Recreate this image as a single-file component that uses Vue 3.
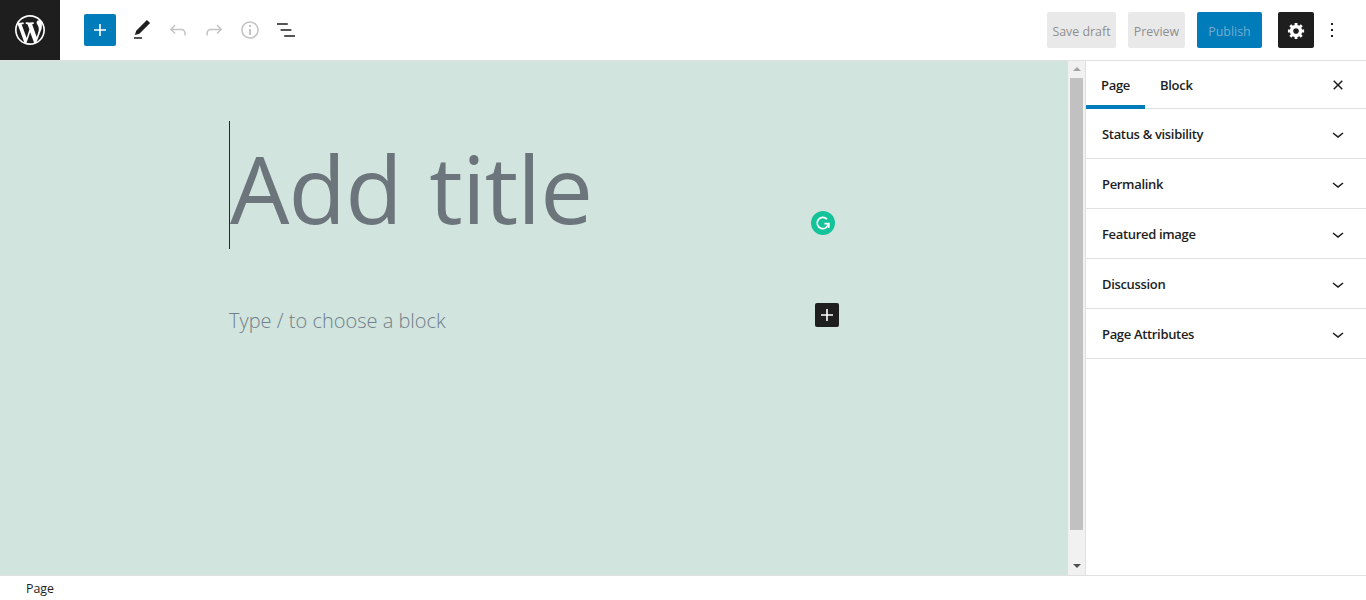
<template>
  <div class="editor">
    <header class="topbar">
      <a class="wp-logo">
        <svg viewBox="-2 -2 24 24" width="36" height="36"><path fill="#fff" :d="icons.wp" /></svg>
      </a>
      <div class="tools">
        <button class="add-btn">
          <svg viewBox="0 0 24 24" width="24" height="24"><path fill="#fff" :d="icons.plus" /></svg>
        </button>
        <button v-for="tool in tools" :key="tool.name" class="icon-btn">
          <svg viewBox="0 0 24 24" width="24" height="24"><path :fill="tool.color" :d="tool.d" /></svg>
        </button>
      </div>
      <div class="actions">
        <button class="btn-muted save">Save draft</button>
        <button class="btn-muted preview">Preview</button>
        <button class="btn-publish">Publish</button>
        <button class="btn-settings">
          <svg viewBox="0 0 20 20" width="19" height="19"><path fill="#fff" :d="icons.cog" /></svg>
        </button>
        <button class="btn-more">
          <svg viewBox="0 0 24 24" width="24" height="24"><path fill="#1e1e1e" :d="icons.dots" /></svg>
        </button>
      </div>
    </header>

    <div class="body">
      <main class="canvas">
        <div class="writing">
          <h1 class="title">Add title</h1>
          <div class="block-row">
            <p class="placeholder">Type / to choose a block</p>
            <button class="inline-add">
              <svg viewBox="0 0 24 24" width="24" height="24"><path fill="#fff" :d="icons.plus" /></svg>
            </button>
          </div>
          <span class="grammarly">
            <svg viewBox="0 0 24 24" width="24" height="24">
              <circle cx="12" cy="12" r="12" fill="#15c39a" />
              <path d="M17.4 12.2a5.6 5.6 0 1 1-1.5-4" fill="none" stroke="#fff" stroke-width="1.7" />
              <path d="M13.4 12.6h4.4v4.2" fill="none" stroke="#fff" stroke-width="1.7" />
            </svg>
          </span>
        </div>
      </main>

      <div class="scrollbar">
        <span class="arrow arrow-up"></span>
        <div class="thumb"></div>
        <span class="arrow arrow-down"></span>
      </div>

      <aside class="sidebar">
        <div class="tabs">
          <div class="tab active">Page</div>
          <div class="tab">Block</div>
          <button class="close">
            <svg viewBox="0 0 24 24" width="24" height="24"><path fill="#1e1e1e" :d="icons.close" /></svg>
          </button>
        </div>
        <div v-for="panel in panels" :key="panel" class="panel">
          <span>{{ panel }}</span>
          <svg viewBox="0 0 24 24" width="24" height="24"><path fill="#1e1e1e" :d="icons.chevron" /></svg>
        </div>
      </aside>
    </div>

    <footer class="statusbar">Page</footer>
  </div>
</template>

<script setup>
const icons = {
  wp: 'M20 10c0-5.51-4.49-10-10-10C4.48 0 0 4.49 0 10c0 5.52 4.48 10 10 10 5.51 0 10-4.48 10-10zM7.78 15.37L4.37 6.22c.55-.02 1.17-.08 1.17-.08.5-.06.44-1.13-.06-1.11 0 0-1.45.11-2.37.11-.18 0-.37 0-.58-.01C4.12 2.69 6.87 1.11 10 1.11c2.33 0 4.45.87 6.05 2.34-.68-.11-1.65.39-1.65 1.58 0 .74.45 1.36.9 2.1.35.61.55 1.36.55 2.46 0 1.49-1.4 5-1.4 5l-3.03-8.37c.54-.02.82-.17.82-.17.5-.05.44-1.25-.06-1.22 0 0-1.44.12-2.38.12-.87 0-2.33-.12-2.33-.12-.5-.03-.56 1.2-.06 1.22l.92.08 1.26 3.41zM17.41 10c.24-.64.74-1.87.43-4.25.7 1.29 1.05 2.71 1.05 4.25 0 3.29-1.73 6.24-4.4 7.78.97-2.59 1.94-5.2 2.92-7.78zM6.1 18.09C3.12 16.65 1.11 13.53 1.11 10c0-1.3.23-2.48.72-3.59C3.25 10.3 4.67 14.2 6.1 18.09zm4.03-6.63l2.58 6.98c-.86.29-1.76.45-2.71.45-.79 0-1.57-.11-2.29-.33.81-2.38 1.62-4.74 2.42-7.1z',
  plus: 'M18 11.2h-5.2V6h-1.6v5.2H6v1.6h5.2V18h1.6v-5.2H18z',
  cog: 'M18 12h-2.18c-.17.7-.44 1.35-.81 1.93l1.54 1.54-2.1 2.1-1.54-1.54c-.58.36-1.23.63-1.91.79V19H8v-2.18c-.68-.16-1.33-.43-1.91-.79l-1.54 1.54-2.12-2.12 1.54-1.54c-.36-.58-.63-1.23-.79-1.91H1V9.03h2.17c.16-.7.44-1.35.8-1.94L2.43 5.55l2.1-2.1 1.54 1.54c.58-.37 1.24-.64 1.93-.81V2h3v2.18c.68.16 1.33.43 1.91.79l1.54-1.54 2.12 2.12-1.54 1.54c.36.59.64 1.24.8 1.94H18V12zm-8.5 1.5c1.66 0 3-1.34 3-3s-1.34-3-3-3-3 1.34-3 3 1.34 3 3 3z',
  dots: 'M13 19h-2v-2h2v2zm0-6h-2v-2h2v2zm0-6h-2V5h2v2z',
  close: 'M12 13.06l3.712 3.713 1.061-1.06L13.061 12l3.712-3.712-1.06-1.06L12 10.938 8.288 7.227l-1.061 1.06L10.939 12l-3.712 3.712 1.06 1.061L12 13.061z',
  chevron: 'M17.5 11.6L12 16l-5.5-4.4.9-1.2L12 14l4.5-3.6 1 1.2z'
}

const tools = [
  { name: 'tools', color: '#1e1e1e', d: 'M20.1 5.1L16.9 2 6.2 12.7l-1.3 4.4 4.5-1.3L20.1 5.1zM4 20.8h8v-1.5H4v1.5z' },
  { name: 'undo', color: '#c4c4c4', d: 'M18.3 11.7c-.6-.6-1.4-.9-2.3-.9H6.7l2.9-3.3-1.1-1-4.5 5L8.5 16l1-1-2.7-2.7H16c.5 0 .9.2 1.3.5 1 1 1 3.4 1 4.5v.3h1.5v-.2c0-1.5 0-4.3-1.5-5.7z' },
  { name: 'redo', color: '#c4c4c4', d: 'M15.6 6.5l-1.1 1 2.9 3.3H8c-.9 0-1.7.3-2.3.9-1.4 1.5-1.4 4.2-1.4 5.6v.2h1.5v-.3c0-1.1 0-3.5 1-4.5.3-.3.7-.5 1.3-.5h9.2L14.5 15l1.1 1.1 4.6-4.6-4.6-5z' },
  { name: 'info', color: '#c4c4c4', d: 'M12 3.2c-4.8 0-8.8 3.9-8.8 8.8 0 4.8 3.9 8.8 8.8 8.8 4.8 0 8.8-3.9 8.8-8.8 0-4.8-4-8.8-8.8-8.8zm0 16c-4 0-7.2-3.3-7.2-7.2C4.8 8 8 4.8 12 4.8s7.2 3.3 7.2 7.2c0 4-3.2 7.2-7.2 7.2zM11 17h2v-6h-2v6zm0-8h2V7h-2v2z' },
  { name: 'list', color: '#1e1e1e', d: 'M13.8 5.2H3v1.5h10.8V5.2zm-3.6 12v1.5H21v-1.5H10.2zm7.2-6H6.6v1.5h10.8v-1.5z' }
]

const panels = ['Status & visibility', 'Permalink', 'Featured image', 'Discussion', 'Page Attributes']
</script>

<style>
html,
body {
  margin: 0;
  overflow: hidden;
}
</style>

<style scoped>
.editor {
  display: flex;
  flex-direction: column;
  height: 600px;
  background: #fff;
  color: #1e1e1e;
  font-family: "Open Sans", "Noto Sans", sans-serif;
  font-size: 13px;
}

button {
  display: flex;
  align-items: center;
  justify-content: center;
  padding: 0;
  border: 0;
  border-radius: 2px;
  background: none;
  font-family: inherit;
  font-size: 12.4px;
}

.topbar {
  display: flex;
  flex: none;
  align-items: center;
  height: 60px;
  border-bottom: 1px solid #e0e0e0;
}

.wp-logo {
  display: flex;
  align-items: center;
  justify-content: center;
  width: 60px;
  height: 60px;
  background: #1e1e1e;
}

.tools {
  display: flex;
  align-items: center;
  margin-left: 24px;
}

.add-btn {
  width: 32px;
  height: 32px;
  margin-right: 8px;
  background: #007cba;
}

.icon-btn {
  width: 36px;
  height: 36px;
}

.actions {
  display: flex;
  align-items: center;
  margin-left: auto;
  padding-right: 22px;
}

.btn-muted,
.btn-publish {
  height: 36px;
  margin-right: 12px;
  padding-top: 2px;
}

.btn-muted {
  background: #e9e9e9;
  color: #8f8f8f;
}

.save {
  width: 69px;
}

.preview {
  width: 57px;
}

.btn-publish {
  width: 65px;
  margin-right: 16px;
  background: #007cba;
  color: #73acd0;
}

.btn-settings {
  width: 36px;
  height: 36px;
  margin-right: 6px;
  background: #1e1e1e;
}

.btn-more {
  width: 24px;
  height: 36px;
}

.body {
  display: flex;
  flex: 1;
  min-height: 0;
}

.canvas {
  flex: 1;
  background: #d2e4de;
}

.writing {
  position: relative;
  width: 610px;
  margin: 60px 0 0 229px;
}

.title {
  height: 128px;
  margin: 0;
  border-left: 1px solid #1e2c30;
  color: #6c757b;
  font-size: 94px;
  font-weight: 400;
  line-height: 134px;
  letter-spacing: -0.9px;
  word-spacing: 4px;
  white-space: nowrap;
}

.block-row {
  display: flex;
  align-items: flex-start;
  justify-content: space-between;
  margin-top: 54px;
}

.placeholder {
  margin: 4px 0 0;
  color: #71808a;
  font-size: 20px;
  font-weight: 300;
  line-height: 28px;
}

.inline-add {
  width: 24px;
  height: 24px;
  background: #1e1e1e;
}

.grammarly {
  position: absolute;
  top: 90px;
  left: 582px;
  display: flex;
}

.scrollbar {
  display: flex;
  flex: none;
  flex-direction: column;
  align-items: center;
  width: 17px;
  background: #f1f1f1;
}

.arrow {
  width: 0;
  height: 0;
  border-right: 4px solid transparent;
  border-left: 4px solid transparent;
}

.arrow-up {
  margin: 6px 0 5px;
  border-bottom: 4px solid #a3a3a3;
}

.arrow-down {
  margin: 34px 0 0;
  border-top: 4px solid #505050;
}

.thumb {
  flex: none;
  width: 13px;
  height: 452px;
  margin: 2px 0 0;
  background: #c1c1c1;
}

.sidebar {
  flex: none;
  width: 280px;
  border-left: 1px solid #e0e0e0;
}

.tabs {
  display: flex;
  align-items: stretch;
  height: 47px;
  border-bottom: 1px solid #e0e0e0;
}

.tab {
  display: flex;
  flex: none;
  align-items: center;
  width: 59px;
  height: 48px;
  padding-left: 15px;
  box-sizing: border-box;
  font-weight: 600;
  letter-spacing: -0.3px;
}

.tab.active {
  box-shadow: inset 0 -4px 0 #007cba;
}

.close {
  align-self: center;
  width: 36px;
  height: 36px;
  margin-left: auto;
  margin-right: 10px;
}

.panel {
  display: flex;
  align-items: center;
  justify-content: space-between;
  height: 49px;
  padding: 0 16px;
  border-bottom: 1px solid #e0e0e0;
  font-weight: 600;
  letter-spacing: -0.33px;
}

.statusbar {
  display: flex;
  flex: none;
  align-items: center;
  height: 24px;
  padding-left: 26px;
  border-top: 1px solid #e0e0e0;
  font-size: 12.4px;
}
</style>
